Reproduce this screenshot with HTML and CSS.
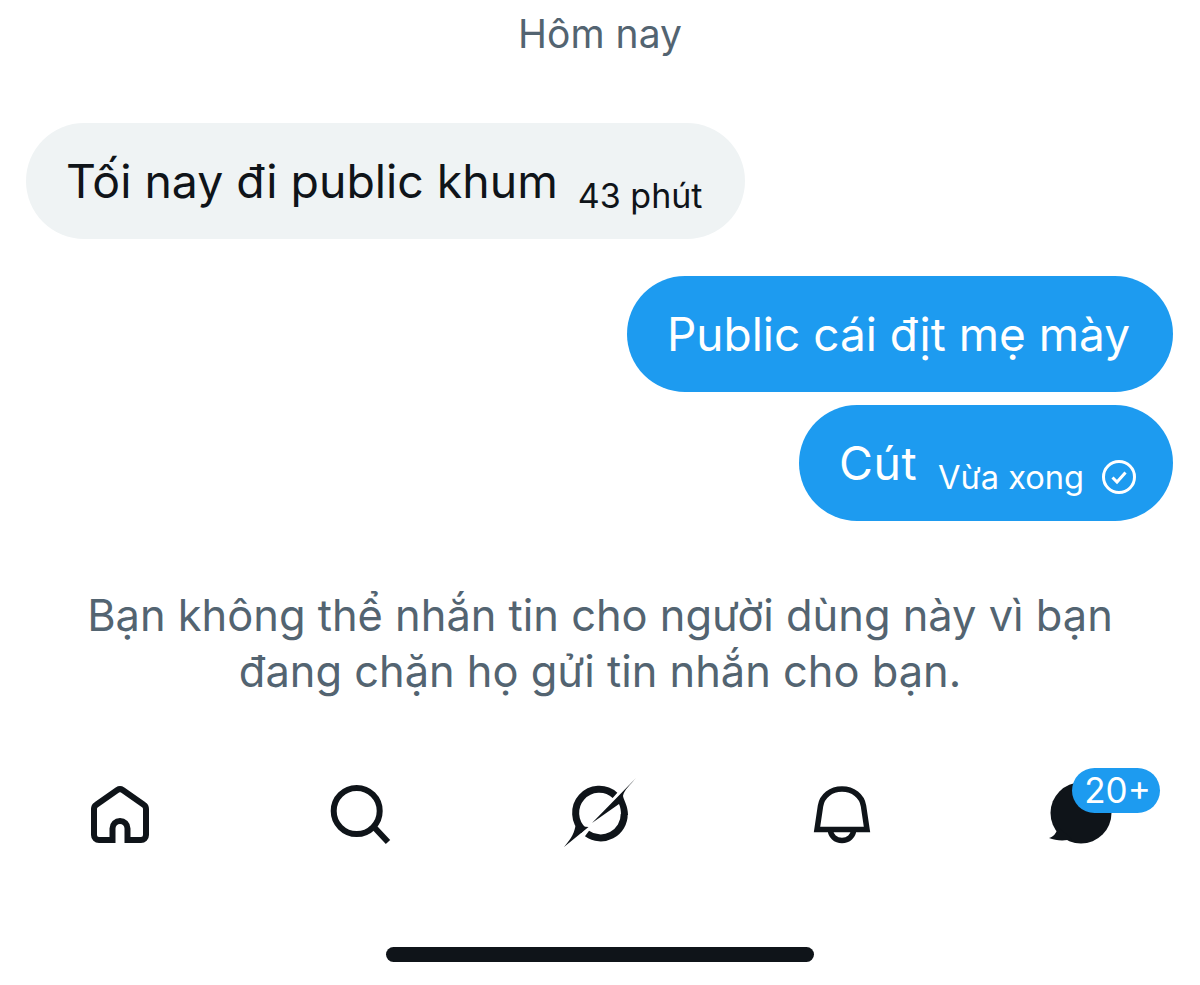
FILE: index.html
```html
<!DOCTYPE html>
<html lang="vi">
<head>
    <meta charset="UTF-8">
    <meta name="viewport" content="width=device-width, initial-scale=1.0">
    <title>Tin nhắn</title>
    <link rel="stylesheet" href="styles.css">
</head>
<body>
    <div class="screen">
        <div class="day">Hôm nay</div>

        <div class="thread">
            <div class="bubble them">
                <span class="text">Tối nay đi public khum</span>
                <span class="time">43 phút</span>
            </div>
            <div class="bubble me first">
                <span class="text">Public cái địt mẹ mày</span>
            </div>
            <div class="bubble me last">
                <span class="text">Cút</span>
                <span class="time">Vừa xong</span>
                <svg class="check" width="36" height="36" viewBox="0 0 36 36" fill="none" stroke="#fff">
                    <circle cx="18" cy="18" r="15.5" stroke-width="3"/>
                    <path d="M11.5 18.5l4.500 4.500 8.500-9.500" stroke-width="3"/>
                </svg>
            </div>
        </div>

        <p class="notice">Bạn không thể nhắn tin cho người dùng này vì bạn đang chặn họ gửi tin nhắn cho bạn.</p>

        <nav class="tabs">
            <div class="tab">
                <svg width="72" height="72" viewBox="0 0 72 72" fill="none" stroke="#0f1419" stroke-width="6">
                    <path d="M28.5 61V49.5a7.5 7.5 0 0 1 15 0V61H57a5 5 0 0 0 5-5V30a5 5 0 0 0-2.3-4.2L38.7 11a5 5 0 0 0-5.4 0L12.3 25.8a5 5 0 0 0-2.3 4.2V56a5 5 0 0 0 5 5z"/>
                </svg>
            </div>
            <div class="tab">
                <svg width="72" height="72" viewBox="0 0 72 72" fill="none" stroke="#0f1419" stroke-width="6">
                    <circle cx="32.7" cy="32" r="23"/>
                    <path d="M49 47l15 16"/>
                </svg>
            </div>
            <div class="tab">
                <svg width="72" height="72" viewBox="0 0 72 72" fill="none" stroke="#0f1419" stroke-width="7">
                    <path d="M51 16.300A23.500 23.500 0 0 0 19.500 51.500"/>
                    <path d="M23 54.500A23.500 23.500 0 0 0 60.200 35"/>
                    <path stroke="none" fill="#0f1419" d="M72-1C66 6 60 11 59 17c1 5 5 10 5 19h-7c0-4-.5-8-2-11L28 44l23-23.500z"/>
                    <path stroke="none" fill="#0f1419" d="M0 68c5-6 9.500-11 11.500-21l7 .5 6 .5z"/>
                </svg>
            </div>
            <div class="tab">
                <svg width="72" height="72" viewBox="0 0 72 72" fill="none" stroke="#0f1419" stroke-width="5.5">
                    <path d="M13 50.500H63L59.500 27C58 17 49 10 38 10S18 17 16.500 27z"/>
                    <path d="M26.500 51a11.500 10.500 0 0 0 23 0"/>
                </svg>
            </div>
            <div class="tab">
                <svg width="72" height="72" viewBox="0 0 72 72">
                    <circle cx="37" cy="34" r="30.500" fill="#0f1419"/>
                    <path fill="#0f1419" d="M14 48c-1 6-5 10-9 11 7 3 17 3 23 1z"/>
                </svg>
                <span class="badge">20+</span>
            </div>
        </nav>

        <div class="home-bar"></div>
    </div>
</body>
</html>
```

FILE: styles.css
```css
body {
    margin: 0;
    background: #ffffff;
    font-family: Inter, "Liberation Sans", sans-serif;
    color: #0f1419;
}

.screen {
    width: 1200px;
    height: 985px;
    overflow: hidden;
    display: flex;
    flex-direction: column;
}

.day {
    margin-top: 9px;
    height: 50px;
    line-height: 50px;
    text-align: center;
    font-size: 39px;
    color: #536471;
}

.thread {
    margin-top: 64px;
    padding: 0 27px 0 26px;
    display: flex;
    flex-direction: column;
    gap: 13px;
}

.bubble {
    height: 116px;
    border-radius: 58px;
    padding: 0 43px 0 40px;
    display: flex;
    align-items: center;
    width: fit-content;
    box-sizing: border-box;
}

.bubble .text {
    font-size: 46.4px;
}

.bubble .time {
    font-size: 32.6px;
    margin-left: 21px;
    padding-top: 28px;
}

.them {
    background: #eff3f4;
    margin-bottom: 24px;
}

.bubble.them .time {
    font-size: 34px;
    margin-left: 20px;
}

.me {
    background: #1d9bf0;
    color: #ffffff;
    align-self: flex-end;
}

.bubble.first .text {
    font-size: 46px;
}

.bubble.last .text {
    letter-spacing: 0.5px;
}

.check {
    margin-left: 17px;
    margin-top: 28px;
    margin-right: -7px;
}

.notice {
    margin: 66px 0 0;
    padding: 0 80px;
    text-align: center;
    font-size: 43.4px;
    line-height: 56px;
    color: #536471;
}

.tabs {
    margin-top: 80px;
    display: grid;
    grid-template-columns: repeat(5, 1fr);
}

.tab {
    position: relative;
    display: flex;
    justify-content: center;
}

.tab svg {
    overflow: visible;
}

.badge {
    position: absolute;
    left: 112px;
    top: -11px;
    height: 45px;
    width: 85px;
    padding-left: 3px;
    border-radius: 23px;
    background: #1d9bf0;
    color: #ffffff;
    font-size: 35px;
    line-height: 45px;
    text-align: center;
}

.home-bar {
    margin: 96px auto 0;
    width: 428px;
    height: 15px;
    border-radius: 8px;
    background: #0f1419;
}
```
